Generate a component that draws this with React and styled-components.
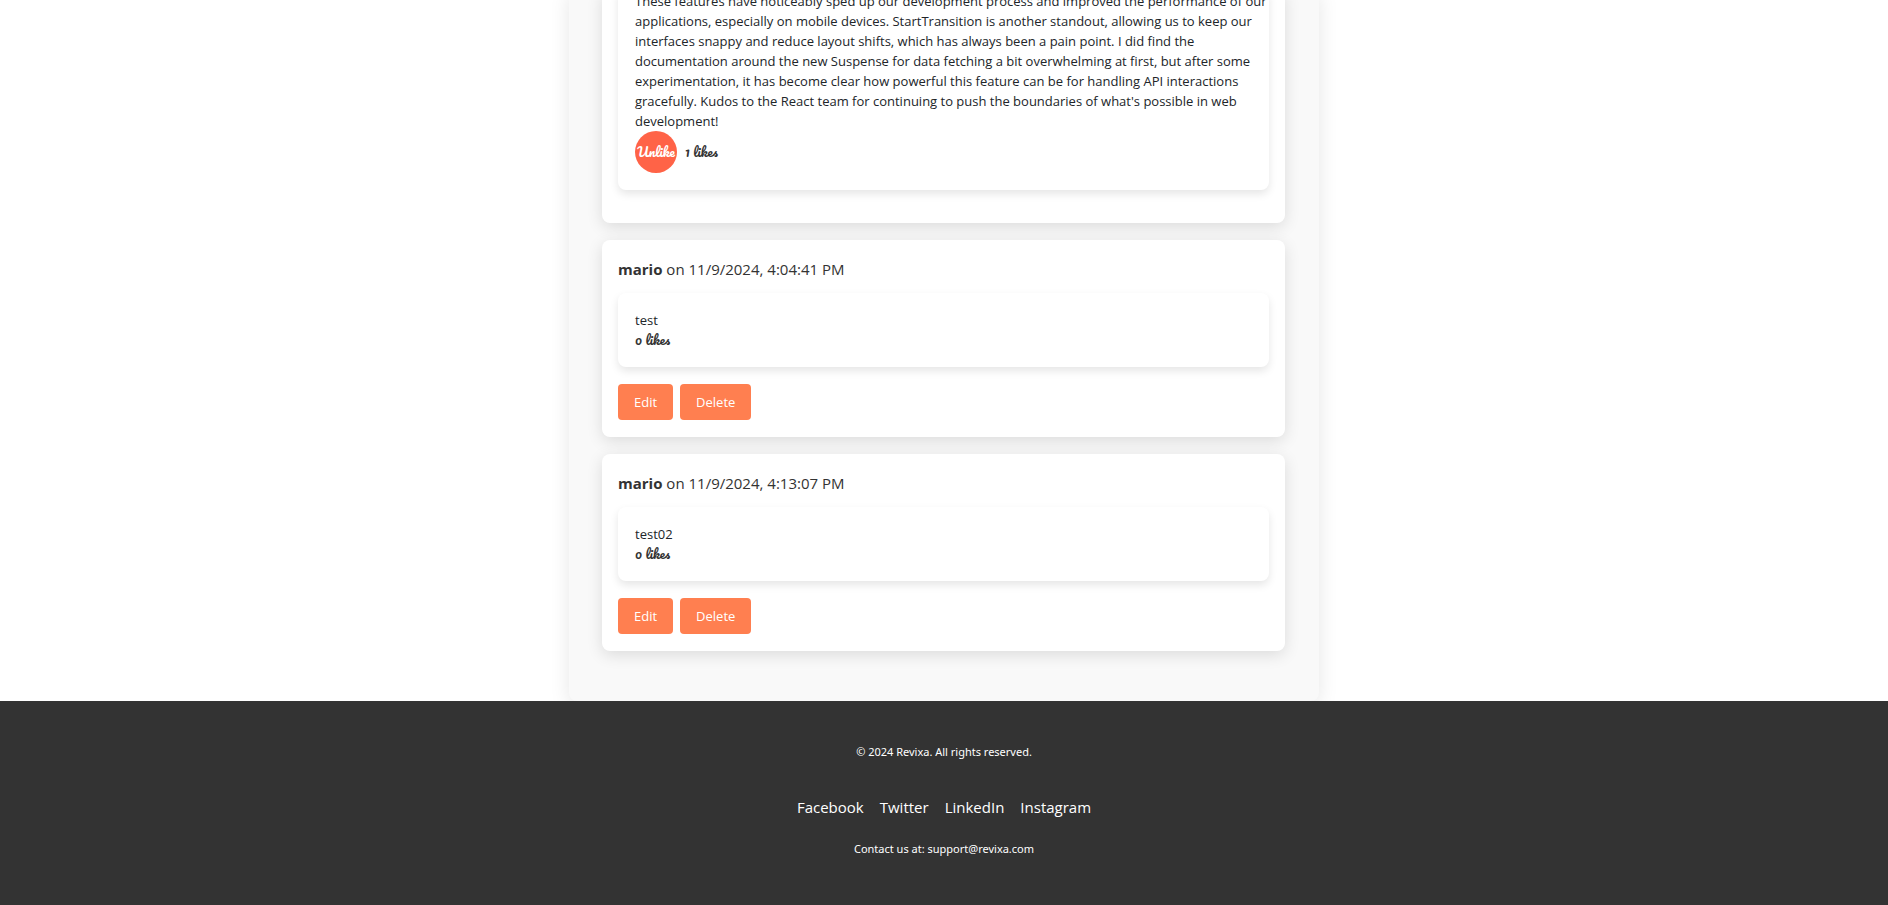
import React from "react";
import styled, { createGlobalStyle } from "styled-components";

const GlobalStyle = createGlobalStyle`
  *, *::before, *::after { box-sizing: border-box; }
  body {
    margin: 0;
    background: #fff;
    color: #212529;
    font-family: "Segoe UI", "Open Sans", "Noto Sans", sans-serif;
    font-size: 13px;
    line-height: 20px;
    overflow-x: hidden;
  }
  p { margin: 0; }
`;

const Page = styled.div`
  display: flex;
  flex-direction: column;
  min-height: 100vh;
  overflow: hidden;
`;

const Container = styled.main`
  width: 100%;
  max-width: 750px;
  margin: -9px auto 0;
  padding: 0 34px 50px 33px;
  background: #f9f9f9;
  border-radius: 0 0 8px 8px;
  box-shadow: 0 4px 20px rgba(0, 0, 0, 0.1);
`;

const CommentList = styled.div`
  display: flex;
  flex-direction: column;
  gap: 17px;
`;

const CommentCard = styled.article`
  padding: ${({ $continued }) => ($continued ? "0 16px 33px" : "17px 16px")};
  background: #fff;
  border-radius: ${({ $continued }) => ($continued ? "0 0 8px 8px" : "8px")};
  box-shadow: 0 4px 16px rgba(0, 0, 0, 0.12);
`;

const CommentHeader = styled.header`
  margin-bottom: 12px;
  color: #333;
  font-size: 15px;
  line-height: 24px;
`;

const CommentBody = styled.section`
  padding: ${({ $continued }) => ($continued ? "0 0 17px 17px" : "17px")};
  background: #fff;
  border-radius: ${({ $continued }) => ($continued ? "0 0 8px 8px" : "8px")};
  box-shadow: 0 4px 8px rgba(0, 0, 0, 0.1);
`;

const LikeRow = styled.div`
  display: flex;
  align-items: center;
  gap: 8px;
`;

const LikeButton = styled.button`
  display: flex;
  align-items: center;
  justify-content: center;
  width: 42px;
  height: 42px;
  padding: 0;
  border: 0;
  border-radius: 50%;
  background: #ff6347;
  color: #fff;
  font: 400 13px/20px "Pacifico", cursive;
  cursor: pointer;
`;

const LikeCount = styled.span`
  color: #333;
  font: 400 13px/20px "Pacifico", cursive;
`;

const Actions = styled.div`
  display: flex;
  gap: 7px;
  margin-top: 17px;
`;

const ActionButton = styled.button`
  height: 36px;
  padding: 0 16px;
  border: 0;
  border-radius: 4px;
  background: #ff7f50;
  color: #fff;
  font: inherit;
  cursor: pointer;
`;

const Footer = styled.footer`
  display: flex;
  flex: 1;
  flex-direction: column;
  align-items: center;
  padding: 42px 16px;
  background: #333;
  color: #fff;
`;

const FooterText = styled.p`
  font-family: "Noto Sans", sans-serif;
  font-size: 11px;
  line-height: 18px;
`;

const FooterNav = styled.nav`
  display: flex;
  flex-wrap: wrap;
  justify-content: center;
  gap: 16px;
  margin: 34px 0 20px;
`;

const FooterLink = styled.a`
  color: #fff;
  font-size: 15px;
  line-height: 25px;
  text-decoration: none;
`;

const reviewText =
  "These features have noticeably sped up our development process and improved the performance of our applications, especially on mobile devices. StartTransition is another standout, allowing us to keep our interfaces snappy and reduce layout shifts, which has always been a pain point. I did find the documentation around the new Suspense for data fetching a bit overwhelming at first, but after some experimentation, it has become clear how powerful this feature can be for handling API interactions gracefully. Kudos to the React team for continuing to push the boundaries of what's possible in web development!";

const ownComments = [
  { author: "mario", date: "11/9/2024, 4:04:41 PM", text: "test", likes: 0 },
  { author: "mario", date: "11/9/2024, 4:13:07 PM", text: "test02", likes: 0 },
];

const links = [
  ["Facebook", "#facebook"],
  ["Twitter", "#twitter"],
  ["LinkedIn", "#linkedin"],
  ["Instagram", "#instagram"],
];

export default function App() {
  return (
    <>
      <GlobalStyle />
      <Page>
        <Container>
          <CommentList>
            <CommentCard $continued>
              <CommentBody $continued>
                <p>{reviewText}</p>
                <LikeRow>
                  <LikeButton type="button">Unlike</LikeButton>
                  <LikeCount>1 likes</LikeCount>
                </LikeRow>
              </CommentBody>
            </CommentCard>
            {ownComments.map((comment) => (
              <CommentCard key={comment.date}>
                <CommentHeader>
                  <strong>{comment.author}</strong> on {comment.date}
                </CommentHeader>
                <CommentBody>
                  <p>{comment.text}</p>
                  <LikeRow>
                    <LikeCount>{comment.likes} likes</LikeCount>
                  </LikeRow>
                </CommentBody>
                <Actions>
                  <ActionButton type="button">Edit</ActionButton>
                  <ActionButton type="button">Delete</ActionButton>
                </Actions>
              </CommentCard>
            ))}
          </CommentList>
        </Container>
        <Footer>
          <FooterText>© 2024 Revixa. All rights reserved.</FooterText>
          <FooterNav aria-label="Social">
            {links.map(([label, href]) => (
              <FooterLink key={label} href={href}>{label}</FooterLink>
            ))}
          </FooterNav>
          <FooterText>Contact us at: support@revixa.com</FooterText>
        </Footer>
      </Page>
    </>
  );
}
